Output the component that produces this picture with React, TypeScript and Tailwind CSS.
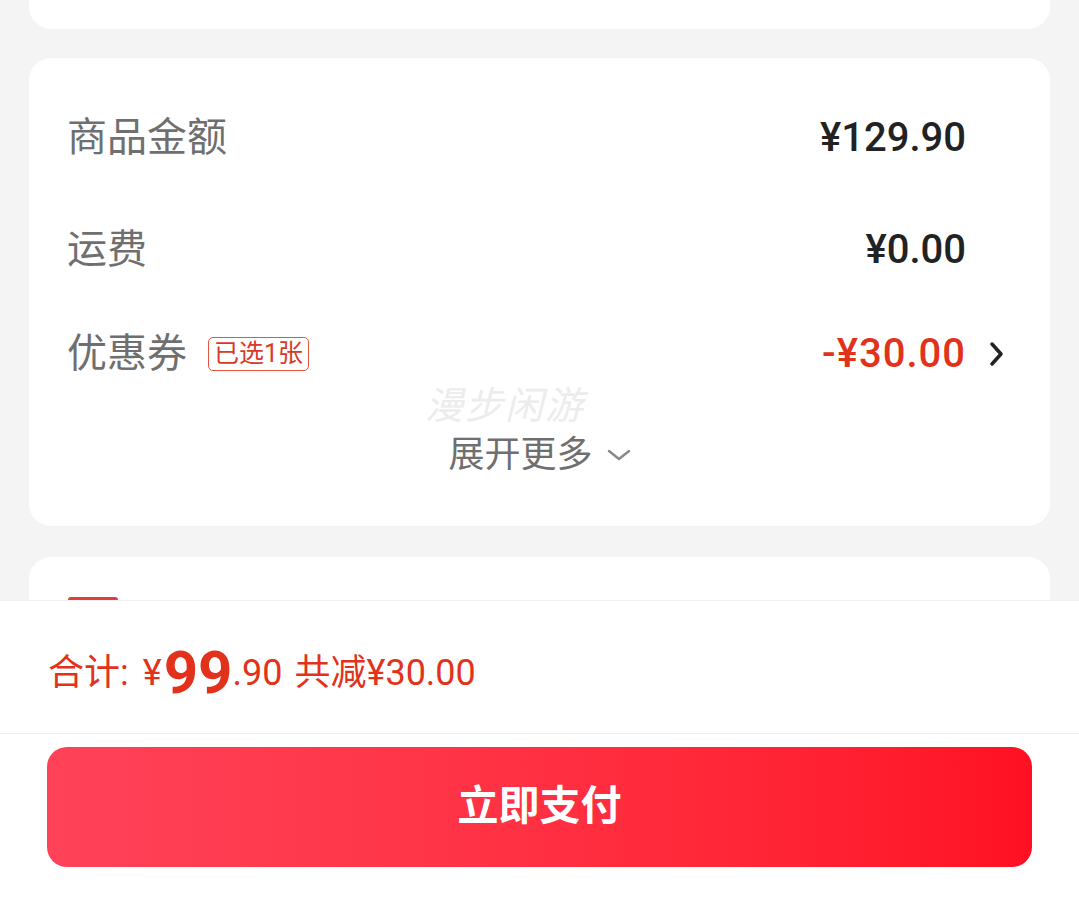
const sans = "font-['Roboto','Noto_Sans_CJK_SC',sans-serif]";

function Row({ label, children }: { label: React.ReactNode; children: React.ReactNode }) {
  return (
    <div className="flex h-[108px] items-center justify-between">
      <div className="flex items-center text-[40px] text-[#6f6f6f]">{label}</div>
      <div className="flex items-center">{children}</div>
    </div>
  );
}

export default function App() {
  return (
    <div className={`${sans} flex h-[900px] w-[1079px] flex-col overflow-hidden bg-[#f4f4f4]`}>
      <div className="mx-[29px] h-[29px] shrink-0 rounded-b-[22px] bg-white" />

      <div className="relative mx-[29px] mt-[29px] shrink-0 rounded-[22px] bg-white pl-[38px] pr-[84px] pt-[26px] pb-[24px]">
        <Row label="商品金额">
          <span className="text-[40px] font-medium text-[#222]">¥129.90</span>
        </Row>
        <div className="pt-[4px]">
          <Row label="运费">
            <span className="text-[40px] font-medium text-[#222]">¥0.00</span>
          </Row>
        </div>
        <div className="-mt-[4px] flex h-[108px] items-center justify-between">
          <div className="flex items-center text-[40px] text-[#6f6f6f]">
            优惠券
            <span className="ml-[21px] rounded-[5px] border border-[#e8543f] px-[5px] text-[25px] leading-[32px] text-[#d93a26]">
              已选1张
            </span>
          </div>
          <div className="relative flex items-center">
            <span className="text-[40px] font-medium tracking-[1px] text-[#e2321c]">-¥30.00</span>
            <svg className="absolute left-full ml-[23px]" width="16" height="26" viewBox="0 0 16 26">
              <path d="M3 3l9 10-9 10" fill="none" stroke="#222" strokeWidth="3.5" strokeLinecap="round" strokeLinejoin="round" />
            </svg>
          </div>
        </div>
        <div className="flex h-[94px] items-center justify-center pl-[46px]">
          <span className="text-[36px] text-[#6f6f6f]">展开更多</span>
          <svg className="ml-[14px]" width="24" height="14" viewBox="0 0 24 14">
            <path d="M2 3l10 8 10-8" fill="none" stroke="#8a8a8a" strokeWidth="2.5" strokeLinecap="round" strokeLinejoin="round" />
          </svg>
        </div>
        <div className="pointer-events-none absolute left-[396px] top-[320px] text-[38px] italic tracking-[2px] text-[#ececec]">
          漫步闲游
        </div>
      </div>

      <div className="mx-[29px] mt-[31px] h-[43px] shrink-0 overflow-hidden rounded-t-[22px] bg-white pl-[39px] pt-[40px]">
        <div className="h-[10px] w-[50px] rounded-t-[3px] bg-[#d9413a]" />
      </div>

      <div className="flex flex-1 flex-col bg-white">
        <div className="flex h-[134px] items-center border-y border-[#f0f0f0] pl-[48px] pt-[12px] text-[#e2321c]">
          <span className="text-[36px]">合计:</span>
          <span className="ml-[14px] text-[36px]">¥</span>
          <span className="ml-[2px] text-[60px] font-bold leading-none">99</span>
          <span className="text-[36px]">.90</span>
          <span className="ml-[12px] text-[36px]">共减¥30.00</span>
        </div>
        <div className="px-[47px] pt-[13px]">
          <button className="flex h-[120px] w-full items-center justify-center rounded-[20px] bg-gradient-to-r from-[#ff4259] to-[#ff1023] text-[41px] font-bold text-white">
            立即支付
          </button>
        </div>
      </div>
    </div>
  );
}
